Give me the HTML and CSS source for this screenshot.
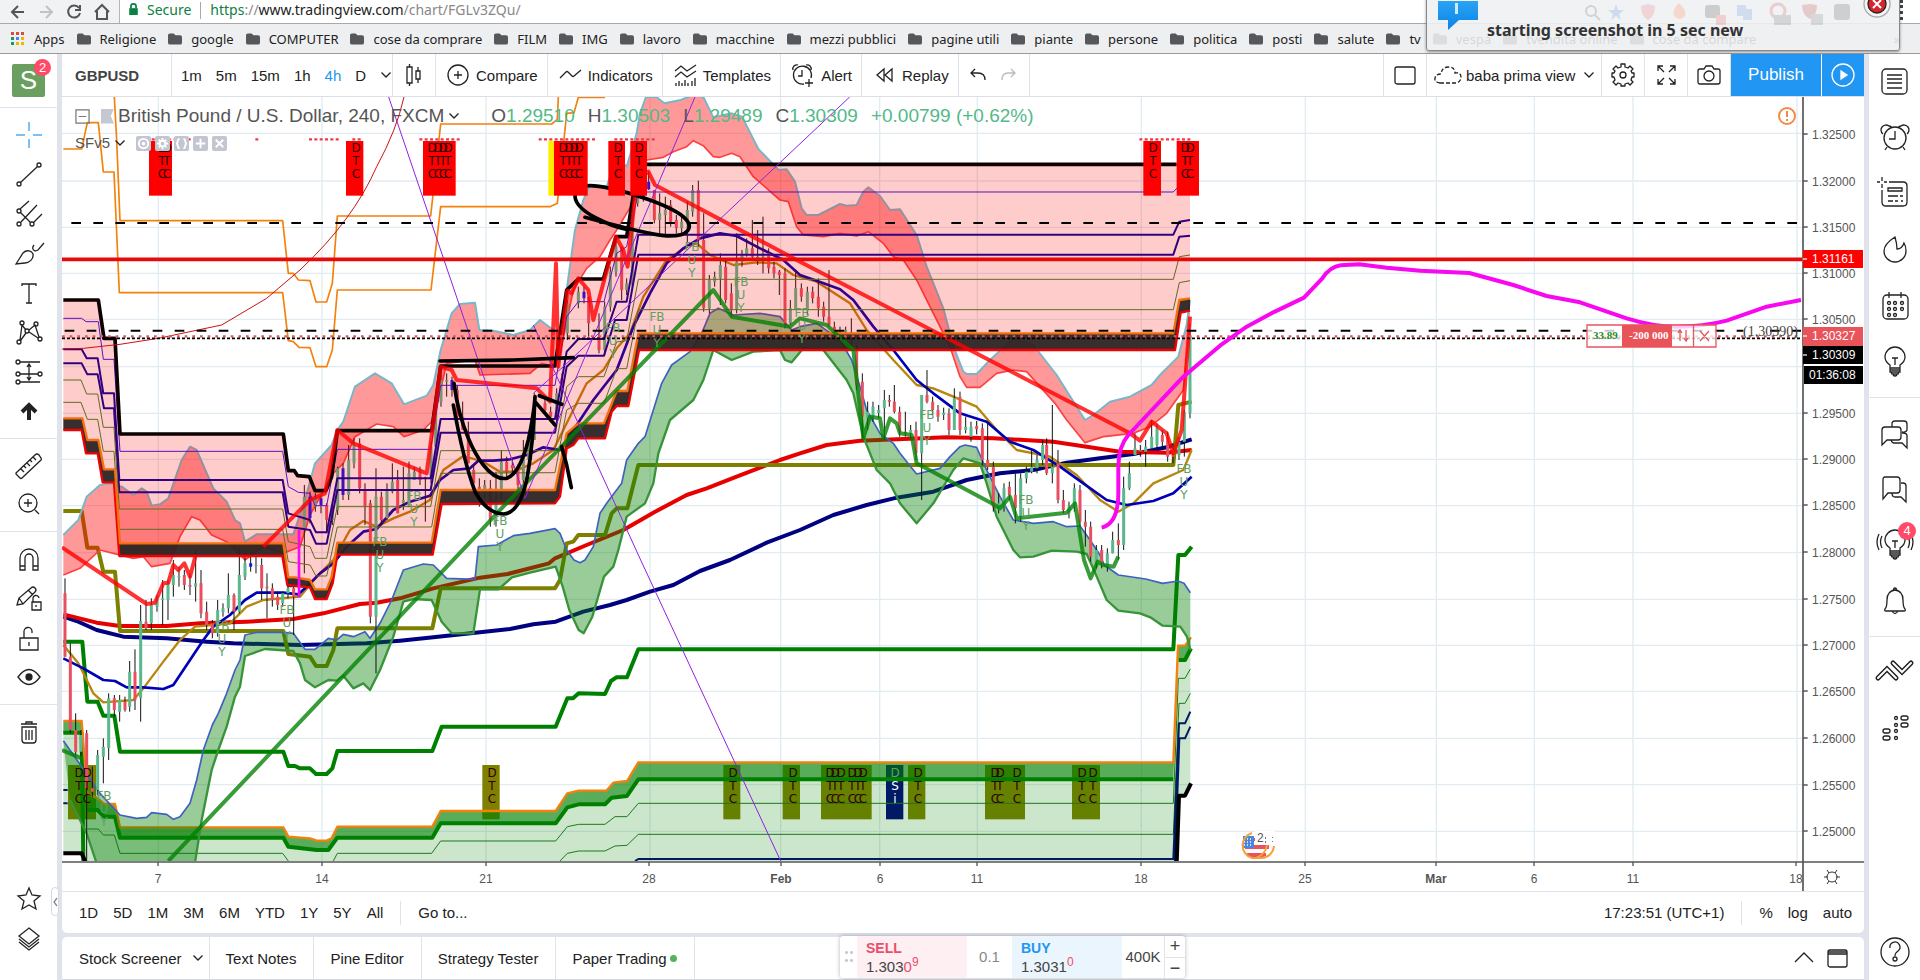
FILE: index.html
```html
<!DOCTYPE html>
<html lang="en">
<head>
<meta charset="utf-8">
<title>GBPUSD 1.30309 — baba prima view</title>
<link rel="stylesheet" href="styles.css">
</head>
<body>
<svg width="0" height="0" class="defs" aria-hidden="true">
  <defs>
    <symbol id="folder" viewBox="0 0 15 12"><path d="M0 2q0-2 2-2h4l2 2h5q2 0 2 2v6q0 2-2 2H2q-2 0-2-2z" fill="#55575a"/></symbol>
    <symbol id="chev" viewBox="0 0 12 8"><path d="M1.500 1.500l4.500 4.500 4.500-4.500"/></symbol>
    <symbol id="bulb" viewBox="0 0 36 36"><path d="M13 24v-3c-3-2-5-5-5-8a10 10 0 0 1 20 0c0 3-2 6-5 8v3zM13 24v4h10v-4M14 28l1 2h6l1-2M13 26h10M16 31q2 2 4 0M15 14h6M18 14v7"/></symbol>
    <symbol id="chat" viewBox="0 0 36 36"><path d="M8 6h12q3 0 3 3v10q0 3-3 3H11l-5 6V9q0-3 2-3zM24 12h2q3 0 3 3v16l-5-5h-6q-3 0-3-4"/></symbol>
  </defs>
</svg>

<header class="browser">
  <div class="nav-row">
    <nav class="nav-icons">
      <button aria-label="Back"><svg viewBox="0 0 16 20"><path d="M14 10H2M8 4l-6 6 6 6"/></svg></button>
      <button aria-label="Forward" class="off"><svg viewBox="0 0 16 20"><path d="M2 10h12M8 4l6 6-6 6"/></svg></button>
      <button aria-label="Reload"><svg viewBox="0 0 16 20"><path d="M13 6a6 6 0 1 0 1 5M14 3v5H9"/></svg></button>
      <button aria-label="Home"><svg viewBox="0 0 16 20"><path d="M1 10l7-7 7 7M3 9v8h10V9"/></svg></button>
    </nav>
    <div class="url">
      <svg class="lock" viewBox="0 0 10 14"><path d="M0 6h10v8H0z" fill="#0b8043"/><path d="M2 6V4a3 3 0 0 1 6 0v2" fill="none" stroke="#0b8043" stroke-width="2"/></svg>
      <span class="secure">Secure</span><span class="bar"></span>
      <span class="addr"><b>https</b>://<i>www.tradingview.com</i>/chart/FGLv3ZQu/</span>
    </div>
    <span class="menu-dots"></span>
  </div>
  <nav class="bookmarks">
    <a href="#"><svg class="apps" viewBox="0 0 14 14"><path d="M0 0h3v3H0zM5 0h3v3H5zM10 0h3v3h-3z" fill="#dd4b39"/><path d="M0 5h3v3H0z" fill="#0f9d58"/><path d="M5 5h3v3H5z" fill="#4285f4"/><path d="M10 5h3v3h-3zM10 10h3v3h-3zM5 10h3v3H5z" fill="#f4b400"/><path d="M0 10h3v3H0z" fill="#0f9d58"/></svg>Apps</a>
    <a href="#"><svg><use href="#folder"/></svg>Religione</a>
    <a href="#"><svg><use href="#folder"/></svg>google</a>
    <a href="#"><svg><use href="#folder"/></svg>COMPUTER</a>
    <a href="#"><svg><use href="#folder"/></svg>cose da comprare</a>
    <a href="#"><svg><use href="#folder"/></svg>FILM</a>
    <a href="#"><svg><use href="#folder"/></svg>IMG</a>
    <a href="#"><svg><use href="#folder"/></svg>lavoro</a>
    <a href="#"><svg><use href="#folder"/></svg>macchine</a>
    <a href="#"><svg><use href="#folder"/></svg>mezzi pubblici</a>
    <a href="#"><svg><use href="#folder"/></svg>pagine utili</a>
    <a href="#"><svg><use href="#folder"/></svg>piante</a>
    <a href="#"><svg><use href="#folder"/></svg>persone</a>
    <a href="#"><svg><use href="#folder"/></svg>politica</a>
    <a href="#"><svg><use href="#folder"/></svg>posti</a>
    <a href="#"><svg><use href="#folder"/></svg>salute</a>
    <a href="#"><svg><use href="#folder"/></svg>tv</a>
    <a href="#"><svg><use href="#folder"/></svg>vespa</a>
    <a href="#"><svg><use href="#folder"/></svg>tvendita online</a>
    <a href="#"><svg><use href="#folder"/></svg>cose da compare</a>
    <span class="more">»</span>
  </nav>
  <aside class="toast">
    <svg class="bubble" viewBox="0 0 40 30"><defs><linearGradient id="bg" x1="0" y1="0" x2="0" y2="1"><stop offset="0" stop-color="#2aa3f2"/><stop offset="1" stop-color="#0a84e8"/></linearGradient></defs><path d="M0 0h40v19H21L10 29V19H0z" fill="url(#bg)"/><path d="M17 2h3v11h-3z" fill="#cdeafd"/></svg>
    <strong>starting screenshot in 5 sec new</strong>
    <svg class="ext" viewBox="0 0 290 24" aria-hidden="true"><g opacity=".16"><circle cx="10" cy="9" r="5" fill="none" stroke="#333" stroke-width="2"/><path d="M14 13l5 5" stroke="#333" stroke-width="2"/><path d="M35 2l2 6h6l-5 4 2 6-5-4-5 4 2-6-5-4h6z" fill="#26d"/><path d="M60 4l7-2 7 2q0 10-7 14-7-4-7-14z" fill="#e44"/><path d="M98 1q8 7 6 13-5 6-11 0-2-7 5-13z" fill="#f50"/><rect x="124" y="3" width="15" height="13" rx="3" fill="#111"/><rect x="135" y="13" width="10" height="10" fill="#e22"/><path d="M156 3h9v11h-9zM162 7h9v11h-9z" fill="#37d"/><circle cx="197" cy="9" r="7" fill="none" stroke="#c11" stroke-width="3"/><rect x="193" y="13" width="17" height="10" fill="#444"/><path d="M221 3l8-1 7 1q0 10-7 14-8-4-8-14z" fill="#a00"/><rect x="230" y="12" width="12" height="11" fill="#555"/><rect x="253" y="2" width="16" height="16" rx="3" fill="#222"/></g></svg>
    <button class="toast-close" aria-label="Close"><svg viewBox="0 0 28 28"><circle cx="14" cy="14" r="13" fill="#f5f5f5" stroke="#aaa"/><circle cx="14" cy="14" r="9" fill="#d5232f"/><path d="M10 10l8 8M18 10l-8 8" stroke="#fff" stroke-width="2"/></svg></button>
  </aside>
</header>

<div class="app">
  <aside class="side left">
    <div class="profile"><div class="avatar">S<span class="badge">2</span></div></div>
    <div class="group g8">
      <button aria-label="Cross"><svg viewBox="0 0 36 36" class="blue"><path d="M18 5v9M18 22v9M5 18h9M22 18h9"/></svg></button>
      <button aria-label="Trend line"><svg viewBox="0 0 36 36"><circle cx="8" cy="28" r="2"/><circle cx="28" cy="9" r="2"/><path d="M9.500 26.500L26.500 10.500"/></svg></button>
      <button aria-label="Pitchfork"><svg viewBox="0 0 36 36"><circle cx="8" cy="15" r="2"/><circle cx="8" cy="28" r="2"/><circle cx="21" cy="28" r="2"/><path d="M9 13l9-8M9.500 16.500l10 10M10 26L26 9M22.500 26.500L31 18"/></svg></button>
      <button aria-label="Brush"><svg viewBox="0 0 36 36"><path d="M5 29l7-11c4-4 9-2 10 1 1 5-4 9-8 9zM23 10q-3 4 1 6l3-1 6-7"/></svg></button>
      <button aria-label="Text"><svg viewBox="0 0 36 36"><path d="M11 11V9h14v2M18 9v19M15 28h6"/></svg></button>
      <button aria-label="Pattern"><svg viewBox="0 0 36 36"><circle cx="11" cy="9" r="2"/><circle cx="25" cy="10" r="2"/><circle cx="16" cy="17" r="2"/><circle cx="8" cy="28" r="2"/><circle cx="29" cy="25" r="2"/><path d="M9 26l2-15 4 5M18 16l6-5 4 12M9.500 26.500L15 19M18 18l9 6"/></svg></button>
      <button aria-label="Forecast"><svg viewBox="0 0 36 36"><circle cx="7" cy="8" r="2"/><circle cx="7" cy="20" r="2"/><circle cx="29" cy="20" r="2"/><circle cx="7" cy="28" r="2"/><path d="M9 8h20M9 20h18M9 28h20M18 11v14M16 13l2-3 2 3M16 23l2 3 2-3"/></svg></button>
      <button aria-label="Arrow"><svg viewBox="0 0 36 36"><path d="M18 27V13M11 19l7-7 7 7" class="bold"/></svg></button>
    </div>
    <div class="group g2">
      <button aria-label="Measure"><svg viewBox="0 0 36 36"><path d="M5 25L24 7q2-2 4 0l2 3q1 1 0 2L11 30q-1 1-2 0l-4-4zM10 21l3 3M13 18l2 2M16 15l3 3M19 12l2 2M22 9l3 3"/></svg></button>
      <button aria-label="Zoom"><svg viewBox="0 0 36 36"><circle cx="17" cy="17" r="9"/><path d="M24 24l4 4M17 13v8M13 17h8"/></svg></button>
    </div>
    <div class="group g4">
      <button aria-label="Magnet"><svg viewBox="0 0 36 36"><path d="M9 29V17a9 9 0 0 1 18 0v12h-5V17a4 4 0 0 0-8 0v12zM9 25h5M22 25h5"/></svg></button>
      <button aria-label="Lock drawing"><svg viewBox="0 0 36 36"><path d="M6 25l2-7L20 8q2-2 4 0t0 4L12 24zM17 10l5 5M8 18l4 6M21 22h9v8h-9zM22 22v-3a3 3 0 0 1 6-1M25 25v2"/></svg></button>
      <button aria-label="Lock all"><svg viewBox="0 0 36 36"><path d="M9 18h18v12H9zM13 18v-6a4 4 0 0 1 8-1v2M18 22v4"/></svg></button>
      <button aria-label="Hide all"><svg viewBox="0 0 36 36"><path d="M7 18q11-15 22 0q-11 15-22 0z"/><circle cx="18" cy="18" r="3" class="fill"/></svg></button>
    </div>
    <div class="group g1">
      <button aria-label="Remove"><svg viewBox="0 0 36 36"><path d="M10 10h16M15 10V8h6v2M11 13h14v13q0 3-3 3h-8q-3 0-3-3zM15 16v10M18 16v10M21 16v10"/></svg></button>
    </div>
    <div class="group last">
      <button aria-label="Favorites"><svg viewBox="0 0 36 36"><path d="M18 8l3 7 8 1-6 5 2 8-7-4-7 4 2-8-6-5 8-1z"/></svg></button>
      <button aria-label="Object tree"><svg viewBox="0 0 36 36"><path d="M18 8l10 8-10 8-10-8zM8 19l10 8 10-8M8 22l10 8 10-8"/></svg></button>
    </div>
    <button class="handle" aria-label="Collapse"><svg viewBox="0 0 6 12"><path d="M5 2L2 6l3 4"/></svg></button>
  </aside>

  <main class="center">
    <section class="panel chart-panel">
      <div class="toolbar">
        <button class="cell symbol">GBPUSD</button>
        <div class="cell intervals"><button>1m</button><button>5m</button><button>15m</button><button>1h</button><button class="on">4h</button><button>D</button><button aria-label="More intervals"><svg class="chev"><use href="#chev"/></svg></button></div>
        <button class="cell sq" aria-label="Candles"><svg class="i24" viewBox="0 0 24 24"><path d="M5 4h5v16H5zM7.500 1v3M7.500 20v3M14 8h4v8h-4zM16 4v4M16 16v4"/></svg></button>
        <button class="cell"><svg class="i24" viewBox="0 0 24 24"><circle cx="12" cy="12" r="10"/><path d="M12 8v8M8 12h8"/></svg>Compare</button>
        <button class="cell"><svg class="i24" viewBox="0 0 24 24"><path d="M2 15l6-6q1-1 2 0l4 4q1 1 2 0l7-6"/></svg>Indicators</button>
        <button class="cell"><svg class="i24" viewBox="0 0 24 24"><path d="M2 8l6-5 6 5 9-6M2 14l6-5 6 5 9-6M3 20v3M6 18v5M9 20v3M12 17v6M15 20v3M19 18v5M22 15v8"/></svg>Templates</button>
        <button class="cell"><svg class="i24" viewBox="0 0 24 24"><path d="M20 15a9 9 0 1 0-7 6M11 7v6H7M2 7a4 4 0 0 1 5-5M15 2a4 4 0 0 1 5 5M18 16v8M14 20h8"/></svg>Alert</button>
        <button class="cell"><svg class="i24" viewBox="0 0 24 24"><path d="M12 6v12l-7-6zM20 6v12l-7-6z"/></svg>Replay</button>
        <div class="cell pair"><button aria-label="Undo"><svg class="i24" viewBox="0 0 24 24"><path d="M8 6l-4 4 4 4M4 10h7q7 0 7 7"/></svg></button><button aria-label="Redo" class="off"><svg class="i24" viewBox="0 0 24 24"><path d="M14 6l4 4-4 4M18 10h-7q-6 0-6 7"/></svg></button></div>
        <span class="spacer"></span>
        <button class="cell sq" aria-label="Layout"><svg class="i24" viewBox="0 0 24 24"><rect x="2" y="4" width="20" height="17" rx="2"/></svg></button>
        <button class="cell view"><svg class="i28" viewBox="0 0 28 24"><path d="M6 20h16q5-1 5-6t-6-4q0-6-7-6-6 0-7 7-5 0-6 4t5 5z" stroke-dasharray="4 2"/></svg>baba prima view<svg class="chev"><use href="#chev"/></svg></button>
        <button class="cell sq" aria-label="Settings"><svg class="i24" viewBox="0 0 24 24"><path stroke-linejoin="round" d="M10 1h4v3l3 1 2-2 3 3-2 2 1 2h2v4h-2l-1 3 2 2-3 3-2-2-3 1v2h-4v-2l-3-1-2 2-3-3 2-2-1-3H1v-4h2l1-2-2-2 3-3 2 2 3-1z"/><circle cx="12" cy="12" r="3"/></svg></button>
        <button class="cell sq" aria-label="Fullscreen"><svg class="i24" viewBox="0 0 24 24"><path d="M4 8V3h5M4 3l6 6M16 3h5v5M21 3l-6 6M4 16v5h5M4 21l6-6M21 16v5h-5M21 21l-6-6"/></svg></button>
        <button class="cell sq" aria-label="Snapshot"><svg class="i24" viewBox="0 0 24 24"><path d="M3 6h4l2-3h6l2 3h4q2 0 2 2v11q0 2-2 2H3q-2 0-2-2V8q0-2 2-2z"/><circle cx="12" cy="13" r="5"/></svg></button>
        <button class="publish">Publish</button>
        <button class="play" aria-label="Stream"><svg class="i24" viewBox="0 0 24 24"><circle cx="12" cy="12" r="11"/><path d="M10 8l6 4-6 4z" fill="#fff"/></svg></button>
      </div>

      <div class="chart">
        <svg class="plot" viewBox="62 97 1802 794" preserveAspectRatio="none" role="img" aria-label="GBPUSD 4h chart">
          <defs><clipPath id="clip"><rect x="186" y="291" width="5220" height="2292"/></clipPath></defs>
          <g transform="scale(.333333)"><g clip-path="url(#clip)">
            <path class="grid" d="M186 400H5406M186 543H5406M186 682H5406M186 820H5406M186 958H5406M186 1100H5406M186 1240H5406M186 1378H5406M186 1517H5406M186 1658H5406M186 1798H5406M186 1936H5406M186 2074H5406M186 2215H5406M186 2354H5406M186 2494H5406M475 291V2583M966 291V2583M1458 291V2583M1950 291V2583M2342 291V2583M2639 291V2583M2932 291V2583M3424 291V2583M3916 291V2583M4309 291V2583M4603 291V2583M4899 291V2583M5391 291V2583"/>
            <g id="low-flags"></g>
            <!-- support zone -->
            <path fill="#008000" fill-opacity=".2" d="M190 2198H245L262 2430H293L312 2450H345L360 2513H850L865 2540L950 2550H985L1012 2513H1297L1322 2470H1667L1702 2422L1736 2413H1815L1835 2393L1881 2388L1915 2338H3520L3535 1980H3555L3571 1945V2350L3555 2387H3537L3530 2590H245V2560H190Z"/>
            <path fill="#008000" fill-opacity=".65" d="M190 2165H245L262 2380L293 2395L312 2412H345L360 2482H850L865 2510L930 2515L950 2522H980L995 2515L1012 2480H1297L1322 2433H1667L1702 2380L1736 2372H1819L1840 2348L1881 2343L1915 2288H3520L3534 1937H3555L3571 1912V1945L3555 1980H3535L3520 2338H1915L1881 2388L1835 2393L1815 2413H1736L1702 2422L1667 2470H1322L1297 2513H1012L985 2550H950L865 2540L850 2513H360L345 2450H312L293 2430H262L245 2198H190Z"/>
            <path class="ln" stroke="#1a7a1a" stroke-width="3" d="M262 2487H295L310 2505H343L360 2560H848L865 2583M1000 2583L1012 2560H1295L1322 2523H1667L1702 2480L1736 2473H1815L1845 2450H1881L1915 2410H3520L3535 2035H3555L3571 2007M1680 2583L1702 2560L1736 2553H1815L1845 2538L1881 2536L1915 2503H3520L3537 2110H3555L3571 2080"/>
            <path class="ln" stroke="#001a66" stroke-width="6" d="M1905 2583L1915 2577H3520L3537 2170H3555L3571 2135M3525 2583L3538 2215H3555L3571 2180M190 2370H203M190 2410H203"/>
            <path class="ln" stroke="#008000" stroke-width="12" d="M190 2198H245L250 2583M262 2430H293L312 2450H345L360 2513H850L865 2540L950 2550H985L1012 2513H1297L1322 2470H1667L1702 2422L1736 2413H1815L1835 2393L1881 2388L1915 2338H3520M3535 1980H3555L3573 1945"/>
            <path class="ln" stroke="#f5800a" stroke-width="7" d="M190 2163H245L262 2380L293 2395L312 2412H345L360 2482H850L865 2510L930 2515L950 2522H980L995 2515L1012 2480H1297L1322 2433H1667L1702 2380L1736 2372H1819L1840 2348L1881 2343L1915 2287H3520L3534 1937H3555L3573 1912"/>
            <path class="ln" stroke="#000" stroke-width="12" d="M190 2560H245L258 2590M3530 2590L3537 2387H3555L3573 2350"/>
            <!-- slow averages and pivots -->
            <path class="ln" stroke="#000080" stroke-width="12" d="M190 1850L230 1863L290 1890L370 1910L500 1915L620 1925L700 1930L900 1935L1100 1930L1200 1922L1300 1912L1440 1897L1530 1887L1600 1873L1667 1865L1750 1835L1830 1815L1880 1800L1950 1775L2020 1755L2100 1713L2190 1680L2300 1628L2400 1590L2500 1545L2600 1515L2690 1493L2800 1475L2900 1440L3000 1420L3100 1410L3200 1388L3300 1375L3400 1362L3500 1342L3575 1318"/>
            <path class="ln" stroke="#e60000" stroke-width="12" d="M190 1843L290 1868L360 1878H500L600 1870L740 1865L880 1857L970 1840L1080 1812L1130 1808L1200 1795L1300 1765L1440 1733L1523 1722L1647 1690L1665 1675L1760 1635L1870 1590L1960 1538L2060 1485L2120 1465L2210 1430L2340 1380L2400 1360L2480 1335L2580 1322L2840 1312L2980 1315L3160 1325L3360 1355L3500 1358L3575 1350"/>
            <path class="ln" stroke="#808000" stroke-width="12" d="M190 1533H245L262 1643H293L310 1715H345L360 1893H850L865 1962L930 1970L948 1998H980L1000 1950L1012 1885H1297L1322 1765H1665L1680 1740L1700 1630L1720 1625L1735 1605H1815L1835 1540L1850 1525H1882L1915 1395H3520L3535 1215L3575 1205"/>
            <path class="ln" stroke="#008000" stroke-width="12" d="M190 1925H247L262 2105H293L310 2147H343L360 2255H850L865 2298H885L900 2305H930L948 2322H980L997 2305L1012 2253H1297L1325 2180H1667L1702 2095L1719 2095L1736 2080L1815 2082L1833 2043L1849 2032H1881L1915 1948H3520L3535 1665H3555L3575 1640"/>
            <!-- lower envelope -->
            <path fill="#008000" fill-opacity=".4" d="M190 2222L245 2300L300 2380L360 2445L410 2455L440 2452L455 2438L500 2443L520 2458L540 2450L570 2410L590 2340L610 2250L637 2175L655 2140L680 2080L705 2010L720 1980L735 1905L770 1897H850L880 1900L915 1948H945L985 1915L1010 1920L1030 1903L1060 1910L1095 1895L1110 1915L1140 1870L1175 1800L1210 1710L1270 1692L1300 1695L1340 1735L1425 1738L1435 1640L1490 1635L1540 1607L1590 1600L1665 1586L1680 1600L1700 1650L1722 1680L1740 1688L1755 1680L1780 1640L1800 1540L1820 1510L1865 1450L1880 1380L1915 1330L1935 1310L1960 1230L1985 1150L2015 1095L2070 1055L2105 1000L2130 940L2155 925L2200 945L2280 940L2340 950L2375 990L2400 980L2450 970L2520 1020L2555 1080L2580 1160L2600 1230L2640 1300L2680 1330L2700 1360L2740 1410L2750 1422L2820 1405L2850 1370L2880 1340L2895 1335L2930 1342L2960 1410L3000 1490L3040 1560L3100 1570L3160 1565L3200 1580L3240 1578L3270 1620L3300 1665L3313 1695L3355 1725L3437 1737L3488 1750L3534 1743L3552 1750L3571 1778V1950L3561 1910L3541 1880L3488 1877L3451 1852L3420 1840L3355 1832L3320 1800L3286 1720L3260 1662L3230 1655L3155 1652L3100 1670L3060 1672L3040 1650L2990 1550L2960 1450L2940 1390L2890 1375L2860 1410L2800 1510L2750 1570L2700 1510L2670 1450L2630 1410L2590 1310L2560 1180L2540 1140L2470 1050L2410 1045L2375 1087L2355 1080L2340 1050L2260 1055L2195 1080L2140 1050L2110 1140L2080 1200L2010 1260L1975 1360L1960 1450L1935 1510L1880 1550L1855 1650L1840 1700L1812 1730L1777 1850L1751 1900L1736 1890L1708 1830L1688 1760L1667 1700L1590 1718L1536 1732L1495 1768H1440L1420 1900H1355L1325 1865L1295 1800L1240 1797L1210 1805L1180 1910L1140 2010L1110 2070L1090 2050L1060 2065L1030 2027L1010 2042L985 2040L945 2062L915 2040L900 1990L880 1953L795 1947L735 1968L720 2060L705 2090L680 2180L655 2250L635 2310L605 2460L580 2620H300L260 2500L210 2400Z"/>
            <path class="ln" stroke="#4060c0" stroke-width="5" d="M190 2222L245 2300L300 2380L360 2445L410 2455L440 2452L455 2438L500 2443L520 2458L540 2450L570 2410L590 2340L610 2250L637 2175L655 2140L680 2080L705 2010L720 1980L735 1905L770 1897H850L880 1900L915 1948H945L985 1915L1010 1920L1030 1903L1060 1910L1095 1895L1110 1915L1140 1870L1175 1800L1210 1710L1270 1692L1300 1695L1340 1735L1425 1738L1435 1640L1490 1635L1540 1607L1590 1600L1665 1586L1680 1600L1700 1650L1722 1680L1740 1688L1755 1680L1780 1640L1800 1540L1820 1510L1865 1450L1880 1380L1915 1330L1935 1310L1960 1230L1985 1150L2015 1095L2070 1055L2105 1000L2130 940L2155 925L2200 945L2280 940L2340 950L2375 990L2400 980L2450 970L2520 1020L2555 1080L2580 1160L2600 1230L2640 1300L2680 1330L2700 1360L2740 1410L2750 1422L2820 1405L2850 1370L2880 1340L2895 1335L2930 1342L2960 1410L3000 1490L3040 1560L3100 1570L3160 1565L3200 1580L3240 1578L3270 1620L3300 1665L3313 1695L3355 1725L3437 1737L3488 1750L3534 1743L3552 1750L3571 1778"/>
            <path class="ln" stroke="#389438" stroke-width="7" d="M3571 1950L3561 1910L3541 1880L3488 1877L3451 1852L3420 1840L3355 1832L3320 1800L3286 1720L3260 1662L3230 1655L3155 1652L3100 1670L3060 1672L3040 1650L2990 1550L2960 1450L2940 1390L2890 1375L2860 1410L2800 1510L2750 1570L2700 1510L2670 1450L2630 1410L2590 1310L2560 1180L2540 1140L2470 1050L2410 1045L2375 1087L2355 1080L2340 1050L2260 1055L2195 1080L2140 1050L2110 1140L2080 1200L2010 1260L1975 1360L1960 1450L1935 1510L1880 1550L1855 1650L1840 1700L1812 1730L1777 1850L1751 1900L1736 1890L1708 1830L1688 1760L1667 1700L1590 1718L1536 1732L1495 1768H1440L1420 1900H1355L1325 1865L1295 1800L1240 1797L1210 1805L1180 1910L1140 2010L1110 2070L1090 2050L1060 2065L1030 2027L1010 2042L985 2040L945 2062L915 2040L900 1990L880 1953L795 1947L735 1968L720 2060L705 2090L680 2180L655 2250L635 2310L605 2460L580 2620H300L260 2500L210 2400"/>
            <!-- upper envelope -->
            <path fill="#ff0000" fill-opacity=".4" d="M190 1605L235 1560L260 1490L300 1455L330 1450L365 1460L400 1485L425 1465L440 1475L455 1517L480 1513L505 1495L545 1380L570 1340L590 1350L640 1465L680 1505L705 1560L720 1570L735 1625L770 1603H880L915 1500L945 1390L995 1335L1012 1290L1030 1265L1065 1160L1125 1120L1175 1150L1212 1213L1280 1187L1300 1155L1322 1050L1355 940L1380 912L1425 908L1438 990L1480 992L1540 1005L1590 990L1620 960L1660 990L1680 1000L1700 870L1725 690L1750 600L1770 555L1820 560L1850 470L1880 500L1910 400L1920 340L1938 291H1969L1993 310L2042 300L2079 285L2110 291L2140 352L2195 340L2226 350L2275 447L2336 510L2360 508L2385 545L2405 625L2420 645H2455L2520 612L2540 617L2570 615L2590 575L2605 562L2640 588L2670 630L2700 628L2750 705L2780 800L2830 925L2860 1040L2890 1115L2900 1122H2930L2970 1080L3040 1015L3100 1035L3170 1125L3255 1260L3280 1245L3330 1205L3390 1190L3455 1155L3480 1125L3535 1070L3560 975L3570 900V970L3550 1170L3500 1240L3450 1280L3400 1300L3310 1310L3255 1328L3200 1260L3165 1210L3120 1160L3080 1115L3040 1110L2990 1120L2940 1162H2900L2880 1130L2850 1040L2790 920L2750 840L2710 780L2680 770L2650 730L2605 695L2570 708L2520 700L2470 710L2410 705L2390 680L2365 605L2340 600L2260 530L2220 470L2195 460L2160 472L2140 470L2110 437L2080 422L2060 440L2020 455L1990 472L1940 480L1910 590L1850 690L1830 720L1800 770L1760 805L1720 870L1680 1060L1660 1100L1625 1090L1590 1120L1440 1125L1425 1080L1340 1090L1300 1260L1270 1290L1212 1310L1180 1280L1130 1272L1065 1310L1030 1390L1000 1420L930 1545L900 1640L850 1660L790 1640L735 1680L680 1625L635 1605L600 1560L575 1550L540 1610L510 1690L455 1700L430 1670L400 1675L300 1650L240 1705L190 1725Z"/>
            <path class="ln" stroke="#7ab6c8" stroke-width="6" d="M190 1605L235 1560L260 1490L300 1455L330 1450L365 1460L400 1485L425 1465L440 1475L455 1517L480 1513L505 1495L545 1380L570 1340L590 1350L640 1465L680 1505L705 1560L720 1570L735 1625L770 1603H880L915 1500L945 1390L995 1335L1012 1290L1030 1265L1065 1160L1125 1120L1175 1150L1212 1213L1280 1187L1300 1155L1322 1050L1355 940L1380 912L1425 908L1438 990L1480 992L1540 1005L1590 990L1620 960L1660 990L1680 1000L1700 870L1725 690L1750 600L1770 555L1820 560L1850 470L1880 500L1910 400L1920 340L1938 291H1969L1993 310L2042 300L2079 285L2110 291L2140 352L2195 340L2226 350L2275 447L2336 510L2360 508L2385 545L2405 625L2420 645H2455L2520 612L2540 617L2570 615L2590 575L2605 562L2640 588L2670 630L2700 628L2750 705L2780 800L2830 925L2860 1040L2890 1115L2900 1122H2930L2970 1080L3040 1015L3100 1035L3170 1125L3255 1260L3280 1245L3330 1205L3390 1190L3455 1155L3480 1125L3535 1070L3560 975L3570 900"/>
            <path class="ln" stroke="#ff4040" stroke-width="5" d="M3570 970L3550 1170L3500 1240L3450 1280L3400 1300L3310 1310L3255 1328L3200 1260L3165 1210L3120 1160L3080 1115L3040 1110L2990 1120L2940 1162H2900L2880 1130L2850 1040L2790 920L2750 840L2710 780L2680 770L2650 730L2605 695L2570 708L2520 700L2470 710L2410 705L2390 680L2365 605L2340 600L2260 530L2220 470L2195 460L2160 472L2140 470L2110 437L2080 422L2060 440L2020 455L1990 472L1940 480L1910 590L1850 690L1830 720L1800 770L1760 805L1720 870L1680 1060L1660 1100L1625 1090L1590 1120L1440 1125L1425 1080L1340 1090L1300 1260L1270 1290L1212 1310L1180 1280L1130 1272L1065 1310L1030 1390L1000 1420L930 1545L900 1640L850 1660L790 1640L735 1680L680 1625L635 1605L600 1560L575 1550L540 1610L510 1690L455 1700L430 1670L400 1675L300 1650L240 1705L190 1725"/>
            <!-- fast averages -->
            <path class="ln" stroke="#b8860b" stroke-width="7" d="M190 1935L235 1990L280 2080L310 2107L400 2100L430 2065L490 1985L540 1920L585 1880L690 1870L740 1820L790 1800L900 1790L950 1730L1000 1680L1050 1590L1090 1563L1130 1580L1180 1555L1230 1535L1290 1500L1330 1410L1390 1368L1450 1385L1500 1415L1540 1415L1600 1390L1660 1350L1700 1270L1760 1150L1810 1110L1850 1045L1890 1000L1930 890L2000 780L2060 740L2090 730L2130 765L2200 795L2270 787L2330 790L2380 825L2450 845L2550 910L2600 990L2680 1080L2750 1155L2800 1165L2860 1190L2930 1220L2990 1290L3050 1350L3150 1370L3230 1425L3300 1500L3355 1535L3400 1510L3460 1450L3550 1410L3575 1350"/>
            <path class="ln" stroke="#0000b4" stroke-width="8" d="M190 1975L250 2005L310 2040L345 2043L380 2062H430L490 2067L520 2055L560 1995L610 1920L640 1880L690 1845L735 1800L770 1778H850L895 1783L920 1760L960 1720L1000 1690L1040 1640L1090 1595L1130 1587L1180 1530L1230 1505L1290 1487L1320 1440L1360 1410L1410 1405L1435 1382H1480L1530 1378L1580 1365L1630 1342L1680 1350L1740 1260L1780 1200L1850 1110L1900 980L1950 880L2000 790L2050 745L2100 715L2160 700L2210 708L2280 745L2350 780L2400 825L2450 842L2520 868L2560 900L2620 980L2680 1050L2750 1140L2800 1180L2880 1240L2960 1265L3030 1325L3100 1350L3180 1400L3250 1450L3320 1500L3380 1515L3460 1503L3520 1480L3575 1430"/>
            <g id="candles"></g>
            <!-- resistance zone -->
            <path fill="#ff0000" fill-opacity=".2" d="M190 900H295L312 1015H345L360 1302H850L865 1412H883L893 1427L928 1430L945 1472H978L995 1430L1012 1292H1295L1322 1098H1665L1700 900L1735 837H1810L1848 710H1880L1915 493H3570V895L3538 900L3520 1000H1915L1882 1173H1850L1812 1270H1735L1700 1300L1665 1470H1322L1295 1628H1012L995 1730L980 1768H945L930 1740L885 1732H865L850 1630H360L345 1408H312L295 1320H262L247 1255H190Z"/>
            <path class="ln" stroke="#5a10c0" stroke-width="3" d="M190 955H245L258 965H295L310 1078H342L360 1354H848L865 1460L895 1477L930 1480L945 1517H980L1012 1348H1292L1322 1156H1665L1700 950L1735 905H1812L1850 760L1880 740L1915 576H3520L3535 560L3570 555"/>
            <path class="ln" stroke="#33007f" stroke-width="6" d="M190 1048H245L260 1075H293L310 1180H342L358 1440H848L865 1540L930 1560L948 1597H980L1012 1435H1292L1322 1257H1665L1700 1055L1735 1017H1812L1850 905H1880L1915 704H3520L3538 665L3570 660M190 1090H245L262 1123H293L312 1225H342L358 1477H848L865 1580L930 1590L948 1631H980L1012 1470H1292L1322 1298H1665L1700 1100L1735 1067H1812L1845 960H1880L1915 764H3520L3538 710L3570 707"/>
            <path class="ln" stroke="#5f6b20" stroke-width="3" d="M190 1140H243L260 1182H293L310 1282H342L358 1527H848L865 1625L930 1640L945 1675H980L1012 1520H1292L1322 1352H1665L1700 1160L1735 1130H1812L1850 1026L1880 1022L1915 838H3520L3538 770L3570 765M190 1207H243L262 1258H293L310 1354H342L358 1588H848L865 1685L930 1695L948 1728H980L1012 1581H1295L1322 1420L1665 1418L1700 1230L1735 1210H1812L1850 1106H1880L1915 929H3520L3538 848L3570 842"/>
            <path fill="#2d2323" fill-opacity=".95" d="M190 1255H247L262 1320H295L312 1408H345L360 1630H850L865 1732H885L930 1740L945 1768H980L995 1730L1012 1628H1295L1322 1470H1665L1700 1300L1735 1270H1812L1850 1173H1882L1915 1000H3520L3538 900L3570 895V932L3542 938L3525 1050H1917L1885 1218H1850L1835 1235L1815 1315H1735L1720 1335L1700 1345L1680 1490L1665 1510H1325L1298 1664H1012L998 1750L980 1797H945L930 1762H862L847 1668H358L342 1447H308L293 1360H258L245 1290H190Z"/>
            <path class="ln" stroke="#f00000" stroke-width="7" d="M190 1290H245L258 1360H293L308 1447H342L358 1668H847L862 1755L930 1762L945 1797H980L998 1750L1012 1664H1298L1325 1512L1665 1510L1680 1490L1700 1345L1720 1335L1735 1315H1815L1835 1235L1850 1218H1885L1917 1050H3525L3542 938L3570 932"/>
            <path class="ln" stroke="#f5700a" stroke-width="7" d="M190 1255H247L262 1320H295L312 1408H345L360 1630H850L865 1732H885L930 1740L945 1768H980L995 1730L1012 1628H1295L1322 1470H1665L1700 1300L1735 1270H1812L1850 1173H1882L1915 1000H3520L3538 900L3570 895"/>
            <path class="ln" stroke="#0c0000" stroke-width="11" d="M190 900H295L312 1015H345L360 1302H850L865 1412H883L893 1427L928 1430L945 1472H978L995 1430L1012 1292H1295L1322 1098H1665L1700 870L1735 837H1810L1848 710H1880L1915 493H3530"/>
            <path class="ln" stroke="#f5800a" stroke-width="5" d="M343 291L350 420L360 662H848L865 820H880L895 840L930 842L948 906H980L997 850L1012 648H1292L1322 372H1655L1672 358L1675 291M190 447H245L262 368H295L310 516H342L358 878H848L865 1022L880 1025L897 1042L930 1043L948 1100H980L997 1050L1012 870H1293L1322 620H1650L1672 610L1700 340L1722 338L1735 292H1815"/>
            <!-- zigzags -->
            <path class="ln" stroke="#ff0000" stroke-opacity=".8" stroke-width="12" d="M186 1642L440 1812L465 1808L490 1750L505 1748L520 1695L535 1710L553 1690L570 1730L587 1665M790 1640L930 1500L975 1480L1012 1290L1060 1330L1280 1420L1322 1100L1355 1110L1370 1140L1610 1165L1650 1205L1668 790L1675 1100L1702 872L1715 880L1735 835L1765 870L1780 960L1848 710L1870 750L1883 800L1910 540L1945 515L1965 555L2400 785L3390 1300L3420 1322L3455 1265L3500 1300L3520 1360L3545 1290L3570 950"/>
            <path class="ln" stroke="#008000" stroke-opacity=".78" stroke-width="12" d="M186 2250L245 2275M505 2583L1440 1595L1500 1530L2140 870L2195 950L2370 980L2400 955L2480 975L2560 1050L2590 1315L2610 1250L2640 1255L2650 1315L2670 1255L2690 1270L2700 1300L2735 1305L2750 1390L2975 1510L3000 1525L3030 1490L3050 1555L3200 1538L3225 1510L3252 1680L3272 1735L3293 1685L3310 1695L3341 1700L3355 1670"/>
            <path class="ln" stroke="#9020e0" stroke-width="3" d="M1166 291L1575 1495L2085 291M2549 291L1690 1100L1600 1180M1600 975L1922 1680L2342 2583"/>
            <path class="ln" stroke="#cc1111" stroke-width="3" d="M186 1047L250 1045L360 1033L475 1015L665 975L800 895L900 810Q1060 660 1130 500Q1190 390 1212 291"/>
            <!-- price levels -->
            <path fill="none" stroke="#e60a0a" stroke-width="11" d="M186 778H5406"/>
            <path fill="none" stroke="#000" stroke-width="6" stroke-dasharray="29 37" d="M214 669H5406M194 992H5230M5310 992H5403"/>
            <path fill="none" stroke="#e05560" stroke-width="7" stroke-dasharray="8 15" d="M186 1009H5403"/>
            <path fill="none" stroke="#000" stroke-width="5" stroke-dasharray="9 6" d="M186 1015H5403"/>
            <!-- freehand marks -->
            <path class="ln" stroke="#000" stroke-width="11" stroke-linecap="round" d="M1320 1083L1540 1080L1720 1073M1755 652Q1950 705 2000 708C2070 710 2080 680 2055 655C2020 620 1900 580 1830 565C1760 550 1725 555 1725 590C1730 640 1840 680 1880 688M1362 1150C1380 1290 1430 1370 1450 1395Q1485 1440 1520 1435Q1560 1420 1585 1320Q1600 1250 1605 1195M1360 1215Q1390 1380 1425 1475Q1460 1540 1510 1542Q1560 1540 1582 1430Q1600 1330 1605 1190M1605 1205L1665 1275M1618 1187L1685 1213M1685 1340L1700 1395L1714 1463"/>
            <path fill="none" stroke="#f808f0" stroke-width="8" d="M897 1590V1792"/>
            <path class="ln" stroke="#f808f0" stroke-width="12" d="M3305 1583Q3355 1570 3355 1480V1400Q3355 1340 3385 1305L3550 1130L3660 1037L3740 980L3820 937L3912 893L3967 835Q3990 800 4022 796L4078 793L4160 803L4261 812L4408 819L4540 855L4640 888L4740 907L4880 955Q4960 980 5030 980Q5110 980 5180 962L5300 920L5403 900"/>
            <g id="top-flags"></g>
            <path fill="none" stroke="#f03a4a" stroke-width="7" stroke-dasharray="9 7" d="M455 418H520M565 418H572M766 418H776M927 418H1020M1057 418H1085M1258 418H1380M1616 418H1788M1843 418H1970M3418 418H3577"/>
          </g>
          <path fill="none" stroke="#555" stroke-width="5" d="M5409 291V2673M186 2586H5592"/>
          <path id="ticks" fill="none" stroke="#555" stroke-width="4"/>
          </g>
          <g id="texts"></g>
          <g class="axis">
            <rect x="1803" y="250" width="60" height="18" fill="#f00"/>
            <rect x="1803" y="327" width="60" height="19" fill="#e9545b"/>
            <rect x="1803" y="346" width="60" height="18" fill="#000"/>
            <rect x="1804" y="366" width="59" height="18" fill="#000"/>
            <path stroke="#fff" d="M1803 259h4M1803 336h4M1803 355h4" opacity=".8"/>
            <text x="1812" y="263">1.31161</text><text x="1812" y="340">1.30327</text><text x="1812" y="359">1.30309</text><text x="1809" y="379">01:36:08</text>
          </g>
          <text class="serif" x="1743" y="336">(1.30390)</text>
          <g class="order">
            <path fill="#fff" fill-opacity=".78" stroke="#e9545b" d="M1587 325h129v22h-129zM1693.500 325v22"/><path fill="#e9545b" d="M1622 325h50v22h-50z"/>
            <text x="1593" y="339">33.89</text><text x="1629" y="339">-200 000</text>
            <path fill="none" stroke="#e9545b" d="M1680 341v-11M1678 333l2-3 2 3M1686 330v11M1684 338l2 3 2-3M1700 331l9 10M1709 331l-9 10"/>
          </g>
          <circle cx="1787" cy="116" r="8" fill="none" stroke="#f58a45" stroke-width="2"/><path d="M1787 111v6M1787 119v2" stroke="#f58a45" stroke-width="2"/>
          <g>
            <circle cx="1256" cy="846" r="13" fill="#fff"/><path fill="#e9545b" d="M1246 838h22v3h-22zM1245 845h24v4h-24zM1247 853h19v3q-9 4-19 0z"/><path fill="#4a87dc" d="M1243 836h11v12h-11z"/><path stroke="#fff" stroke-dasharray="1 2" d="M1244 839h9M1244 842h9M1244 845h9"/><path fill="none" stroke="#f5a03c" stroke-width="2" d="M1252 833a13 13 0 0 0 0 25h10a13 13 0 0 0 12-12M1256 858q10-4 11-13"/><path fill="#fff" d="M1255 831h20v14h-20z"/><text x="1257" y="842">2</text><path fill="#777" d="M1265 837h1v2h-1zM1265 841h1v2h-1zM1272 837h1v1h-1zM1272 841h1v1h-1z"/>
          </g>
          <g class="gear"><circle cx="1832" cy="877" r="5"/><path d="M1829 873l-2-3M1835 873l2-3M1828 877h-4M1836 877h4M1829 881l-2 3M1835 881l2 3"/><circle cx="1832" cy="877" r="4" fill="#fff" stroke="none"/></g>
        </svg>
        <div class="legend">
          <div class="line1">
            <svg class="min" viewBox="0 0 16 16"><path d="M1 1h14v14H1zM4 8h8"/></svg><span class="tag"></span>
            <span class="name">British Pound / U.S. Dollar, 240, FXCM</span><svg class="chev"><use href="#chev"/></svg>
            <span class="ohlc"><span>O<b>1.29510</b></span><span>H<b>1.30503</b></span><span>L<b>1.29489</b></span><span>C<b>1.30309</b></span><span><b>+0.00799 (+0.62%)</b></span></span>
          </div>
          <div class="line2">SFv5<svg class="chev"><use href="#chev"/></svg>
            <span class="tools"><svg viewBox="0 0 16 16"><circle cx="8" cy="8" r="5"/><circle cx="8" cy="8" r="1"/></svg><svg viewBox="0 0 16 16"><circle cx="8" cy="8" r="3"/><path d="M8 2v3M8 11v3M2 8h3M11 8h3M4 4l2 2M10 10l2 2M12 4l-2 2M4 12l2-2"/></svg><svg viewBox="0 0 16 16"><path d="M6 3q-2 0-2 3l-1 2 1 2q0 3 2 3M10 3q2 0 2 3l1 2-1 2q0 3-2 3"/></svg><svg viewBox="0 0 16 16"><path d="M8 3v10M3 8h10"/></svg><svg viewBox="0 0 16 16"><path d="M4 4l8 8M12 4l-8 8"/></svg></span>
          </div>
        </div>
      </div>

      <div class="ranges">
        <button>1D</button><button>5D</button><button>1M</button><button>3M</button><button>6M</button><button>YTD</button><button>1Y</button><button>5Y</button><button>All</button>
        <span class="sep"></span><button>Go to...</button>
        <span class="spacer"></span>
        <button>17:23:51 (UTC+1)</button><span class="sep"></span><button>%</button><button>log</button><button>auto</button>
      </div>
    </section>

    <section class="panel tabs">
      <button class="tab">Stock Screener<svg class="chev"><use href="#chev"/></svg></button>
      <button class="tab">Text Notes</button>
      <button class="tab">Pine Editor</button>
      <button class="tab">Strategy Tester</button>
      <button class="tab">Paper Trading<span class="dot"></span></button>
      <span class="spacer"></span>
      <button class="ico" aria-label="Expand"><svg class="i24" viewBox="0 0 24 24"><path d="M3 16l9-9 9 9"/></svg></button>
      <button class="ico" aria-label="Maximize"><svg class="i24" viewBox="0 0 24 24"><rect x="2" y="4" width="19" height="17" rx="2"/><path d="M2 8h19M2 6h19"/></svg></button>
      <div class="trade">
        <span class="grip"></span>
        <button class="sell"><strong>SELL</strong><span>1.303<em>0</em><sup>9</sup></span></button>
        <span class="spread">0.1</span>
        <button class="buy"><strong>BUY</strong><span>1.3031<sup>0</sup></span></button>
        <span class="qty">400K</span>
        <span class="step"><button>+</button><button>−</button></span>
      </div>
    </section>
  </main>

  <aside class="side right">
    <div class="group">
      <button aria-label="Watchlist"><svg viewBox="0 0 36 36"><rect x="5" y="5" width="25" height="25" rx="4"/><path d="M10 11h15M10 15h15M10 19h15M10 24h15"/></svg></button>
      <button aria-label="Alerts"><svg viewBox="0 0 36 36"><circle cx="18" cy="18" r="11"/><path d="M18 11v8h-6M6 14a5 5 0 0 1 6-8q2 0 3 2M30 14a5 5 0 0 0-6-8q-2 0-3 2M10 27l-2 3M26 27l2 3"/></svg></button>
      <button aria-label="Data window"><svg viewBox="0 0 36 36"><path d="M12 6h14q4 0 4 4v16q0 4-4 4H9q-4 0-4-4V14M5 1v4M5 8v4M0 6h3M7 6h3M11 12h14v3H11zM11 20h10M23 20h3M11 25h5M18 25h3M24 25h2"/></svg></button>
      <button aria-label="Hotlist"><svg viewBox="0 0 36 36"><path d="M18 5q-11 7-11 14a11 11 0 0 0 22 0q0-5-2-8-2 6-7 6 0-5-2-12z"/></svg></button>
      <button aria-label="Calendar"><svg viewBox="0 0 36 36"><rect x="6" y="7" width="25" height="24" rx="4"/><path d="M12 4v6M24 4v6"/><circle cx="12" cy="15" r="1.500"/><circle cx="18" cy="15" r="1.500"/><circle cx="25" cy="15" r="1.500"/><circle cx="12" cy="21" r="1.500"/><circle cx="18" cy="21" r="1.500"/><circle cx="25" cy="21" r="1.500"/><circle cx="12" cy="27" r="1.500"/><circle cx="18" cy="27" r="1.500"/></svg></button>
      <button aria-label="My ideas"><svg><use href="#bulb"/></svg></button>
    </div>
    <div class="group pad">
      <button aria-label="Public chats"><svg viewBox="0 0 36 36"><path d="M8 12h13q3 0 3 3v7q0 3-3 3H10l-5 5V15q0-3 3-3zM15 12V9q0-3 3-3h9q3 0 3 3v6q-1 3-5 2M25 18h1q4 0 4 3v12l-5-5h-8q-2 0-3-3"/></svg></button>
      <button aria-label="Private chats"><svg><use href="#chat"/></svg></button>
      <button aria-label="Ideas stream"><svg viewBox="0 0 36 36"><use href="#bulb" width="36" height="36"/><path d="M5 9q-3 6 0 12M2 7q-4 8 0 16M31 9q3 6 0 12M34 7q4 8 0 16"/></svg><span class="badge">4</span></button>
      <button aria-label="Notifications"><svg viewBox="0 0 36 36"><path d="M8 26q2-2 2-9 0-9 8-10 8 1 8 10 0 7 2 9 1 2-1 2H9q-2 0-1-2zM16 7q2-4 4 0M15 28q3 5 6 0"/></svg></button>
    </div>
    <div class="group pad">
      <button aria-label="Order panel"><svg viewBox="0 0 36 36"><path d="M1 24l9-9 9 9" class="tube"/><path d="M1 24l9-9 9 9" class="tube in"/><path d="M16 9l9 9 9-9" class="tube"/><path d="M16 9l9 9 9-9" class="tube in"/></svg></button>
      <button aria-label="Depth of market"><svg viewBox="0 0 36 36"><circle cx="19" cy="8" r="1.500"/><circle cx="19" cy="15" r="1.500"/><circle cx="19" cy="21" r="1.500"/><circle cx="19" cy="28" r="1.500"/><rect x="24" y="6" width="7" height="4" rx="2"/><rect x="24" y="13" width="7" height="4" rx="2"/><rect x="6" y="19" width="7" height="4" rx="2"/><rect x="6" y="26" width="7" height="4" rx="2"/></svg></button>
    </div>
    <span class="spacer"></span>
    <button aria-label="Help"><svg viewBox="0 0 36 36"><circle cx="18" cy="18" r="14"/><path d="M13 14a5 5 0 1 1 8 3q-3 2-3 5"/><circle cx="18" cy="25" r="2"/></svg></button>
  </aside>
</div>
<script src="chart.js"></script>
</body>
</html>
```
FILE: styles.css
```css
* { box-sizing: border-box; }
body { margin: 0; min-height: 100vh; display: flex; flex-direction: column; background: #e0e3eb; font-family: "Liberation Sans", Arial, sans-serif; font-size: 15px; color: #222; overflow-x: hidden; }
button { font: inherit; color: inherit; background: none; border: 0; padding: 0; margin: 0; cursor: pointer; }
a { color: inherit; text-decoration: none; }
svg { display: block; fill: none; stroke: #222; stroke-width: 1.3; flex: none; }
.defs { position: absolute; }
.spacer { flex: 1; }
.off { opacity: .3; }
.chev { width: 12px; height: 8px; }
.i24 { width: 24px; height: 24px; }
.i28 { width: 28px; height: 24px; }

/* browser frame */
.browser { position: relative; height: 54px; background: #eeeff1; border-bottom: 1px solid #9b9b9b; font-family: "Noto Sans", sans-serif; }
.nav-row { display: flex; height: 24px; background: #fff; border-bottom: 1px solid #a9a9a9; }
.nav-icons { width: 120px; padding-left: 10px; display: flex; gap: 12px; background: #f1f2f3; border-right: 1px solid #b5b5b5; }
.nav-icons svg { width: 16px; height: 20px; stroke: #555; stroke-width: 2; }
.url { display: flex; align-items: flex-start; gap: 9px; padding-left: 9px; font-size: 14px; line-height: 20px; }
.lock { width: 9px; height: 12px; stroke: none; margin-top: 3px; }
.secure { color: #0b8043; }
.bar { width: 1px; height: 17px; margin-top: 2px; background: #aaa; }
.addr { color: #888; }
.addr b { font-weight: 400; color: #0b8043; }
.addr i { font-style: normal; color: #222; }
.menu-dots { margin-left: auto; width: 3px; margin-right: 17px; border-left: 3px dotted #444; height: 20px; }
.bookmarks { display: flex; align-items: center; height: 29px; padding-left: 11px; gap: 12px; font-size: 13px; white-space: nowrap; overflow: hidden; }
.bookmarks a { display: flex; align-items: center; gap: 9px; flex: none; }
.bookmarks svg { width: 14px; height: 12px; stroke: none; }
.bookmarks .apps { height: 14px; }
.more { margin-left: auto; padding-right: 20px; }
.toast { position: absolute; z-index: 5; top: -10px; right: 20px; width: 474px; height: 61px; background: rgba(239, 240, 241, .88); border: 1px solid #888; border-radius: 3px; box-shadow: 0 1px 3px rgba(0, 0, 0, .4); padding: 10px 0 0 11px; display: flex; gap: 9px; }
.bubble { width: 40px; height: 30px; stroke: none; }
.toast strong { font-size: 16px; line-height: 22px; margin-top: 18px; color: #333; white-space: nowrap; }
.ext { position: absolute; left: 154px; top: 11px; width: 290px; height: 24px; stroke: none; }
.toast-close { position: absolute; right: 8px; top: -1px; }
.toast-close svg { width: 28px; height: 28px; }

/* frame */
.app { flex: 1; display: flex; gap: 5px; min-height: 926px; }
.side { background: #fff; display: flex; flex-direction: column; align-items: center; flex: none; }
.side button { position: relative; width: 100%; display: flex; justify-content: center; align-items: center; }
.side svg { width: 36px; height: 36px; overflow: visible; }
.group { width: 100%; display: flex; flex-direction: column; border-bottom: 1px solid #e0e3eb; }
.left { position: relative; width: 57px; }
.left .group { padding: 9px 0; justify-content: space-between; }
.left .g8 { height: 331px; }
.left .g2 { height: 93px; }
.left .g4 { height: 173px; }
.left .g1, .left .last { border: 0; }
.left .last { margin-top: auto; gap: 4px; padding-bottom: 24px; }
.profile { width: 100%; height: 54px; border-bottom: 1px solid #e0e3eb; padding: 10px 0 0 12px; }
.avatar { position: relative; width: 33px; height: 33px; border-radius: 2px; background: #6a9f5f; color: #fff; font-size: 26px; line-height: 33px; text-align: center; }
.badge { position: absolute; top: -5px; right: -6px; width: 17px; height: 17px; border-radius: 9px; background: #ff4a68; color: #fff; font-size: 13px; line-height: 17px; text-align: center; }
.right .badge { top: 5px; right: 4px; width: 18px; height: 18px; line-height: 18px; }
.side .blue { stroke: #7cc0f8; stroke-width: 2; }
.side .bold { stroke-width: 4; }
.fill { fill: #222; }
.side .handle { position: absolute; right: -2px; top: 833px; width: 8px; height: 29px; background: #fff; border: 1px solid #d5d8e0; border-radius: 4px; }
.side .handle svg { width: 6px; height: 12px; stroke: #888; }
.right { width: 51px; }
.right button { height: 56px; }
.right .group { padding-bottom: 7px; }
.right .group.pad { padding-top: 7px; }
.right .group:nth-of-type(3) { border: 0; }
.tube { stroke-width: 5; stroke-linecap: round; }
.tube.in { stroke: #fff; stroke-width: 2; }
.center { flex: 1; min-width: 0; display: flex; flex-direction: column; gap: 4px; }
.panel { background: #fff; border-radius: 0 0 5px 5px; }
.chart-panel { flex: 1; display: flex; flex-direction: column; }

/* top toolbar */
.toolbar { display: flex; height: 43px; border-bottom: 1px solid #dcdfe6; white-space: nowrap; }
.cell { display: flex; align-items: center; gap: 6px; padding: 0 9px 0 10px; border-right: 1px solid #e0e3eb; }
.spacer + .cell { border-left: 1px solid #e0e3eb; }
.sq { padding: 0 9px; }
.symbol { width: 110px; padding-left: 13px; font-weight: 700; color: #444; }
.intervals { width: 221px; gap: 14px; padding-left: 9px; }
.intervals .on { color: #2196f3; }
.pair { gap: 6px; padding: 0 8px; }
.view { width: 175px; gap: 4px; padding: 0 6px 0 7px; }
.view .chev { margin-left: auto; }
.publish { width: 90px; background: #2196f3; color: #fff; font-size: 17px; }
.play { width: 42px; margin-left: 1px; background: #2196f3; display: flex; align-items: center; justify-content: center; }
.play svg { stroke: #fff; }

/* chart */
.chart { position: relative; flex: 1; min-height: 500px; }
.plot { position: absolute; inset: 0; width: 100%; height: 100%; stroke: none; }
.grid { stroke: #e1ecf2; stroke-width: 4; fill: none; }
.ln { fill: none; stroke-linejoin: round; }
.plot text { font-size: 12px; fill: #555; }
.plot .axis text { fill: #fff; }
.plot .b { font-weight: 700; }
.plot .flagtext { font-family: "DejaVu Sans", sans-serif; fill: #300; }
.plot .buytext { font-family: "DejaVu Sans", sans-serif; fill: #5fa05f; }
.plot .white { fill: #fff; }
.plot .serif { font-family: "Liberation Serif", serif; font-size: 14px; fill: #444; }
.plot .order text { font-family: "Liberation Serif", serif; font-weight: 700; font-size: 11px; fill: #fff; }
.plot .order text:first-of-type { fill: #2e8b1e; }
.gear { stroke: #333; fill: none; stroke-width: 1; }
.legend { position: absolute; left: 13px; top: 8px; color: #555; white-space: nowrap; }
.line1 { display: flex; align-items: center; font-size: 19px; line-height: 22px; }
.min { width: 15px; height: 15px; stroke: #777; }
.tag { width: 13px; height: 15px; margin: 0 4px 0 11px; background: #c5c7d2; clip-path: polygon(0 0, 100% 0, 75% 50%, 100% 100%, 0 100%); }
.line1 .chev { margin-left: 4px; }
.ohlc { display: flex; gap: 13px; margin-left: 31px; }
.ohlc b { font-weight: 400; color: #53b987; }
.line2 { display: flex; align-items: center; margin-top: 6px; font-size: 15px; line-height: 20px; gap: 4px; }
.tools { display: flex; gap: 4px; margin-left: 6px; }
.tools svg { width: 15px; height: 15px; background: #c3c6d0; border-radius: 2px; stroke: #fff; stroke-width: 2; }

/* bottom bars */
.ranges { display: flex; align-items: center; height: 42px; padding: 0 12px 0 17px; gap: 15px; border-top: 1px solid #e0e3eb; }
.ranges .sep { width: 1px; height: 24px; background: #e0e3eb; margin: 0 2px; }
.tabs { position: relative; display: flex; height: 43px; border-radius: 5px 5px 0 0; border-bottom: 1px solid #d5d8e0; }
.tab { display: flex; align-items: center; gap: 10px; padding: 0 17px 0 16px; border-right: 1px solid #e0e3eb; white-space: nowrap; }
.tab:first-child { padding: 0 5px 0 17px; }
.dot { width: 7px; height: 7px; margin-left: -7px; border-radius: 4px; background: #53b35f; }
.ico { padding: 0 10px 0 6px; }
.ico:last-of-type { padding: 0 14px 0 0; }
.trade { position: absolute; left: 778px; top: -1px; height: 42px; display: flex; align-items: stretch; background: #fff; border-radius: 3px; box-shadow: 0 0 4px rgba(0, 0, 0, .3); }
.grip { width: 17px; background: radial-gradient(circle, #c5c8d0 1px, transparent 2px) 4px 14px / 5px 5px no-repeat, radial-gradient(circle, #c5c8d0 1px, transparent 2px) 9px 14px / 5px 5px no-repeat, radial-gradient(circle, #c5c8d0 1px, transparent 2px) 4px 22px / 5px 5px no-repeat, radial-gradient(circle, #c5c8d0 1px, transparent 2px) 9px 22px / 5px 5px no-repeat; }
.sell, .buy { width: 110px; padding-left: 9px; display: flex; flex-direction: column; justify-content: center; text-align: left; line-height: 17px; color: #444; background: #fdeff2; }
.buy { background: #ebf5fe; }
.sell strong { color: #eb4d6c; font-size: 14px; }
.buy strong { color: #2196f3; font-size: 14px; }
.trade em { font-style: normal; color: #eb4d6c; }
.trade sup { color: #eb4d6c; font-size: 12px; line-height: 10px; }
.spread { width: 45px; text-align: center; line-height: 42px; color: #888; }
.qty { width: 42px; text-align: center; line-height: 42px; color: #444; }
.step { width: 21px; border-left: 1px solid #e0e3eb; display: flex; flex-direction: column; }
.step button { flex: 1; font-size: 18px; line-height: 20px; color: #444; }
.step button + button { border-top: 1px solid #e0e3eb; }
```
FILE: chart.js
```js
const NS = "http://www.w3.org/2000/svg";
const add = (id, tag, attrs, text) => {
  const el = document.createElementNS(NS, tag);
  for (const k in attrs) el.setAttribute(k, attrs[k]);
  if (text) el.textContent = text;
  document.getElementById(id).appendChild(el);
};

// colour, x, body top, body bottom, wick top, wick bottom
const bars = `r 195 1780 1970 1735 1970,r 211 1970 2190 1930 2200,r 227 2190 2255 2140 2270,g 243 2205 2255,r 260 2200 2365 2190 2583,r 277 2365 2375 2300 2390,g 293 2265 2370 2250 2385,g 310 2240 2270 2215 2350,g 326 2095 2245 2080 2280,r 343 2095 2130 2085 2150,g 359 2100 2135 2085 2165,r 375 2105 2130 2090 2135,g 389 2015 2120 1983 2135,r 405 2015 2100 1948 2130,g 422 1863 2095 1815 2165,r 438 1865 1885 1800 1890,g 454 1815 1870 1795 1890,g 471 1800 1820,g 488 1795 1800 1740 1875,g 504 1750 1800 1740 1860,g 520 1725 1755 1680 1790,g 537 1728 1732 1700 1760,r 553 1725 1755,r 570 1755 1760 1720 1785,g 587 1750 1760 1650 1805,r 603 1750 1840 1710 1855,r 620 1835 1875 1805 1890,r 637 1870 1900 1860 1915,g 653 1830 1900 1800 1910,g 669 1825 1835 1810 1850,g 685 1785 1825 1720 1840,r 702 1785 1835 1780 1890,g 718 1725 1835 1645 1840,g 735 1690 1730 1650 1740,b 752 1690 1700 1655 1715,g 768 1694 1698 1665 1720,r 785 1695 1765 1675 1800,r 801 1760 1765 1720 1855,r 817 1765 1800 1750 1820,r 833 1790 1815,g 848 1780 1810 1775 1820,g 864 1765 1780,r 881 1765 1790 1755 1905,g 913 1490 1590 1455 1720,b 930 1490 1555,g 946 1495 1520,b 963 1495 1515 1490 1540,r 980 1515 1560 1510 1600,g 997 1530 1560,g 1013 1405 1530 1400 1545,b 1029 1405 1485,g 1046 1380 1485 1335 1500,g 1062 1330 1390,r 1079 1330 1465,r 1095 1470 1520 1450 1575,r 1111 1510 1850 1500 1870,g 1128 1490 1850 1405 2020,r 1144 1490 1560,g 1161 1470 1555 1450 1560,g 1177 1445 1475 1390 1480,r 1193 1440 1540 1410 1540,g 1210 1500 1510 1400 1530,g 1227 1420 1520 1385 1520,g 1243 1415 1440 1400 1440,r 1260 1415 1440,r 1276 1432 1438 1430 1565,g 1293 1340 1435,g 1307 1205 1340,g 1323 1140 1205,g 1340 1140 1145 1120 1190,b 1356 1140 1170 1130 1190,r 1372 1170 1250,r 1388 1250 1290 1205 1290,r 1405 1300 1390 1265 1390,r 1421 1410 1450,r 1438 1460 1475 1435 1520,g 1454 1455 1480,r 1471 1465 1560 1440 1580,g 1488 1485 1560 1415 1580,g 1504 1385 1490 1350 1500,r 1520 1385 1415,r 1537 1395 1405,r 1554 1410 1455,g 1570 1360 1440 1320 1450,g 1586 1320 1380 1300 1400,g 1603 1200 1320 1180 1320,r 1635 1210 1230,r 1652 1235 1250,g 1670 1180 1245,r 1686 1135 1160,g 1702 910 1000 900 1020,g 1735 875 910,b 1752 875 895,r 1766 890 970 890 1010,r 1797 1010 1050 940 1060,g 1814 920 1050,g 1831 815 920,g 1848 740 815,r 1865 740 870 740 900,g 1880 850 870,g 1897 610 855,g 1913 550 610 490 620,b 1930 545 590,b 1946 545 568 515 570,r 1963 570 660 570 670,g 1979 640 660 580 700,g 1996 630 645 590 710,r 2012 615 665,r 2029 660 685,g 2045 665 685,g 2062 630 665 605 730,g 2078 570 635 555 650,r 2095 570 720 542 740,r 2111 720 925 640 935,g 2128 840 925,g 2144 830 845,g 2161 795 835 760 915,r 2177 800 900 775 910,r 2194 880 930 850 950,g 2210 785 930 700 940,g 2226 765 785,g 2240 745 765 715 770,r 2257 745 770 660 775,g 2273 770 775 690 795,g 2289 760 770 650 820,r 2306 760 805,r 2322 800 820,r 2338 815 825 810 885,r 2355 820 970,g 2371 925 970 900 975,g 2387 865 930 810 930,r 2404 865 890,g 2422 875 930,r 2438 875 895,r 2455 890 925 835 950,r 2471 920 950,r 2487 950 975 810 980,r 2503 980 995,g 2520 990 995 980 1020,g 2537 990 995 980 1020,r 2554 1000 1050 955 1050,r 2570 1050 1155,r 2587 1145 1250 1120 1320,g 2603 1235 1255 1205 1290,g 2619 1220 1250,g 2636 1230 1240,g 2653 1200 1225 1170 1320,r 2668 1200 1205,r 2683 1205 1235 1155 1240,r 2699 1235 1295,r 2716 1295 1300 1235 1310,g 2732 1290 1300,r 2748 1290 1360 1265 1380,g 2765 1185 1360 1185 1500,r 2781 1185 1205 1110 1210,r 2798 1205 1230,r 2814 1230 1250,g 2831 1238 1245,r 2847 1240 1290,g 2863 1195 1290 1165 1290,r 2880 1190 1290,g 2897 1280 1290 1250 1300,g 2913 1280 1310,r 2930 1278 1288,r 2947 1285 1380,r 2963 1380 1400 1270 1410,r 2980 1400 1520,g 2996 1510 1530 1480 1540,g 3012 1465 1520,r 3028 1460 1485,r 3046 1485 1525 1420 1570,g 3062 1435 1550,g 3079 1415 1435,g 3095 1400 1415 1350 1420,g 3111 1380 1405,g 3128 1335 1380,r 3140 1335 1420 1315 1425,g 3157 1400 1420 1215 1450,r 3174 1390 1500 1350 1510,r 3190 1500 1530 1470 1540,g 3207 1520 1540,g 3223 1465 1520,r 3240 1470 1565,r 3256 1565 1580 1530 1640,r 3272 1580 1670,g 3289 1650 1690,r 3305 1650 1690,g 3322 1660 1700,g 3338 1620 1660 1595 1660,r 3355 1620 1635 1570 1680,g 3371 1465 1635 1430 1650,g 3388 1420 1465 1385 1470,g 3405 1345 1365 1300 1365,r 3421 1350 1355,g 3437 1340 1355 1320 1400,g 3455 1310 1345 1260 1350,g 3471 1285 1335,r 3487 1305 1325,r 3503 1310 1370,r 3519 1350 1370 1330 1390,g 3537 1325 1365,g 3553 1235 1325 1230 1370,g 3570 1010 1240`;
const fill = { r: "#e8505f", g: "#5ab88c", b: "#1a10f0" };
const wicks = [];
const bodies = { r: [], g: [], b: [] };
for (const bar of bars.split(",")) {
  const [c, x, t, b, wt, wb] = bar.split(" ");
  wicks.push(`M${x} ${wt || t - 15}V${wb || +b + 15}`);
  bodies[c].push(`M${x} ${t}V${b}`);
}
add("candles", "path", { d: wicks.join(""), stroke: "#111", "stroke-width": 3 });
for (const c in bodies) add("candles", "path", { d: bodies[c].join(""), stroke: fill[c], "stroke-width": 9 });

// flags: x, width, letter x positions
const label = (group, rows, x, y, cls) => rows.forEach((s, i) => {
  add(group, "text", { x, y: y + i * 13, class: cls, "text-anchor": "middle" }, s);
});
const highFlags = [[447, 69, [486, 500]], [1038, 52, [1067]], [1269, 98, [1297, 1313, 1329, 1345]], [1662, 101, [1690, 1706, 1722, 1738]], [1825, 50, [1853]], [1891, 50, [1918]], [3430, 53, [3458]], [3530, 67, [3555, 3571]]];
add("top-flags", "rect", { x: 1645, y: 423, width: 17, height: 164, fill: "#ffee00" });
for (const [x, width, xs] of highFlags) {
  add("top-flags", "rect", { x, y: 423, width, height: 164, fill: "#ff0000" });
  xs.forEach(u => label("texts", ["D", "T", "C"], Math.round(u / 3), 152, "flagtext"));
}
const lowFlags = [[204, 84, [236, 262]], [1447, 52, [1475]], [2170, 51, [2198]], [2348, 52, [2378]], [2463, 152, [2490, 2506, 2522, 2556, 2573, 2589]], [2724, 52, [2753]], [2955, 120, [2984, 3000, 3050]], [3216, 84, [3245, 3278]]];
for (const [x, width, xs] of lowFlags) {
  add("low-flags", "rect", { x, y: 2295, width, height: 163, fill: "#808000" });
  xs.forEach(u => label("texts", ["D", "T", "C"], Math.round(u / 3), 777, "flagtext"));
}
add("low-flags", "rect", { x: 2658, y: 2295, width: 52, height: 163, fill: "#000080" });
label("texts", ["D"], 895, 777, "buytext");
label("texts", ["S", "i"], 895, 790, "white flagtext");

for (const [x, y] of [[287, 614], [222, 630], [380, 546], [104, 800], [414, 500], [500, 525], [692, 251], [741, 286], [802, 317], [657, 321], [927, 419], [1026, 504], [1184, 473], [613, 332]])
  label("texts", ["FB", "U", "Y"], x, y, "buytext");

// axes
const ys = [134, 181, 227, 273, 319, null, 413, 459, 505, 552, 599, 645, 691, 738, 785, 831];
let ticks = "";
ys.forEach((y, i) => {
  if (!y) return;
  ticks += `M5409 ${y * 3}h14`;
  add("texts", "text", { x: 1812, y: y + 5 }, (1.325 - i * 0.005).toFixed(5));
});
[[158, "7"], [322, "14"], [486, "21"], [649, "28"], [781, "Feb"], [880, "6"], [977, "11"], [1141, "18"], [1305, "25"], [1436, "Mar"], [1534, "6"], [1633, "11"], [1796, "18"]].forEach(([x, s]) => {
  ticks += `M${x * 3} 2586v12`;
  add("texts", "text", { x, y: 883, "text-anchor": "middle", class: s.length > 2 ? "b" : "n" }, s);
});
document.getElementById("ticks").setAttribute("d", ticks);
```
